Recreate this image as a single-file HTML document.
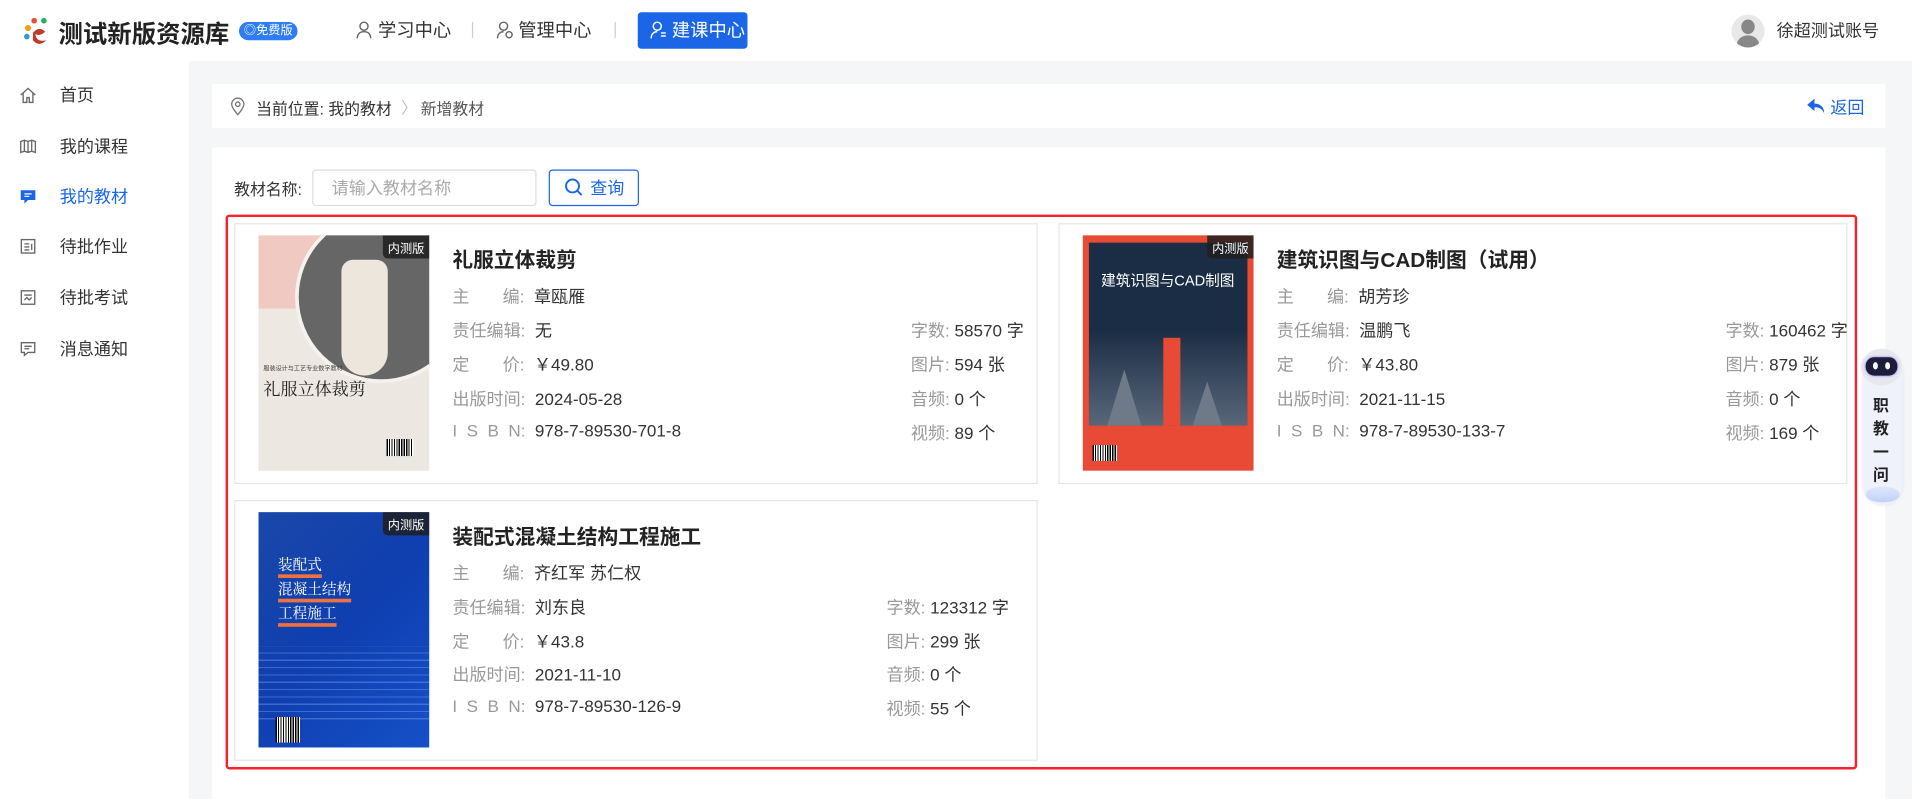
<!DOCTYPE html>
<html><head><meta charset="utf-8"><style>
html,body{margin:0;padding:0;width:1912px;height:798px;overflow:hidden;background:#fff}
#s{position:absolute;left:0;top:0;width:1568px;height:655px;transform:scale(1.2194);transform-origin:0 0;font-family:"Liberation Sans","Noto Sans CJK SC",sans-serif;color:#333;font-size:14px}
.a{position:absolute;white-space:nowrap}
.lb{color:#999}
.card{position:absolute;border:1px solid #e6e6e6;background:#fff}
.tag{position:absolute;right:0;top:0;background:rgba(30,30,30,.85);color:#fff;font-size:10px;padding:2px 4px;border-bottom-left-radius:4px}
.t{font-size:17px;font-weight:bold;color:#222}
.mi{position:absolute;left:16px;width:14px;height:14px}
</style></head><body><div id="s">
<!-- header -->
<svg class="a" style="left:18px;top:13px" width="26" height="26" viewBox="0 0 26 26"><circle cx="5" cy="10" r="2.5" fill="#f39c12"/><circle cx="10" cy="4" r="2.3" fill="#e74c3c"/><circle cx="18" cy="4" r="2.3" fill="#27ae60"/><circle cx="4" cy="17" r="2.3" fill="#3498db"/><path d="M9 14 Q14 8 19 13 Q15 17 11 15 Q12 22 20 20 Q14 26 9 20 Z" fill="#c0392b"/></svg>
<div class="a" style="left:48px;top:12px;font-size:20px;font-weight:bold;color:#222">测试新版资源库</div>
<div class="a" style="left:196px;top:18px;width:48px;height:15px;background:#2e7cf6;border-radius:8px;color:#fff;font-size:10px;line-height:15px;text-align:center">◎免费版</div>
<svg class="a" style="left:292px;top:17px" width="13" height="15" viewBox="0 0 13 15" fill="none" stroke="#666" stroke-width="1.2"><circle cx="6.5" cy="4.5" r="3.3"/><path d="M1 14.5c0-4 2.5-5.5 5.5-5.5s5.5 1.5 5.5 5.5"/></svg>
<div class="a" style="left:310px;top:14px;font-size:15px;color:#333">学习中心</div>
<div class="a" style="left:387px;top:18px;width:1px;height:13px;background:#ccc"></div>
<svg class="a" style="left:407px;top:17px" width="14" height="15" viewBox="0 0 14 15" fill="none" stroke="#666" stroke-width="1.2"><circle cx="6" cy="4.5" r="3.3"/><path d="M1 14.5c0-4 2.5-5.5 5-5.5"/><circle cx="10.5" cy="11.5" r="2.5"/></svg>
<div class="a" style="left:425px;top:14px;font-size:15px;color:#333">管理中心</div>
<div class="a" style="left:504px;top:18px;width:1px;height:13px;background:#ccc"></div>
<div class="a" style="left:523px;top:10px;width:90px;height:30px;background:#1a66e6;border-radius:3px"></div>
<svg class="a" style="left:533px;top:17px" width="14" height="15" viewBox="0 0 14 15" fill="none" stroke="#fff" stroke-width="1.2"><circle cx="6" cy="4.5" r="3.3"/><path d="M1 14.5c0-4 2.5-5.5 5-5.5M9 10h4M9 12.5h4"/></svg>
<div class="a" style="left:551px;top:14px;font-size:15px;color:#fff">建课中心</div>
<div class="a" style="left:1420px;top:12px;width:27px;height:27px;border-radius:50%;background:#e8e8e8;overflow:hidden"><div style="position:absolute;left:8px;top:4px;width:11px;height:12px;border-radius:50%;background:#888"></div><div style="position:absolute;left:4px;top:17px;width:19px;height:14px;border-radius:9px 9px 0 0;background:#888"></div></div>
<div class="a" style="left:1457px;top:15px;font-size:14px;color:#333">徐超测试账号</div>
<!-- bg -->
<div class="a" style="left:155px;top:50px;width:1413px;height:605px;background:#f5f6f8"></div>
<!-- sidebar -->
<div class="a" style="left:0;top:50px;width:155px;height:605px;background:#fff">
<svg class="mi" style="top:21px" viewBox="0 0 14 14" fill="none" stroke="#666" stroke-width="1.1"><path d="M1 7L7 1.5 13 7M3 5.5V13h3V9h2v4h3V5.5"/></svg><div class="a" style="left:49px;top:18px">首页</div>
<svg class="mi" style="top:63px" viewBox="0 0 14 14" fill="none" stroke="#666" stroke-width="1.1"><path d="M1 3v9l3-1 3 1 3-1 3 1V3l-3-1-3 1-3-1zM4 2v9M7 3v9M10 2v9"/></svg><div class="a" style="left:49px;top:60px">我的课程</div>
<svg class="mi" style="top:104px" viewBox="0 0 14 14"><path d="M1 2h12v8H7l-3 3v-3H1z" fill="#1a66e6"/><path d="M4 5h6M4 7h4" stroke="#fff"/></svg><div class="a" style="left:49px;top:101px;color:#1a66e6">我的教材</div>
<svg class="mi" style="top:145px" viewBox="0 0 14 14" fill="none" stroke="#666" stroke-width="1.1"><rect x="1.5" y="1.5" width="11" height="11"/><path d="M4 5h4M4 7.5h4M4 10h4M10 5v5"/></svg><div class="a" style="left:49px;top:142px">待批作业</div>
<svg class="mi" style="top:187px" viewBox="0 0 14 14" fill="none" stroke="#666" stroke-width="1.1"><rect x="1.5" y="1.5" width="11" height="11"/><path d="M4 5h6M4 9l2-2 2 2 2-2"/></svg><div class="a" style="left:49px;top:184px">待批考试</div>
<svg class="mi" style="top:229px" viewBox="0 0 14 14" fill="none" stroke="#666" stroke-width="1.1"><path d="M1.5 2h11v8H7l-3 2.5V10H1.5z"/><path d="M4 5h6M4 7h4"/></svg><div class="a" style="left:49px;top:226px">消息通知</div>
</div>
<!-- breadcrumb -->
<div class="a" style="left:174px;top:69px;width:1372px;height:36px;background:#fff"></div>
<svg class="a" style="left:189px;top:80px" width="12" height="15" viewBox="0 0 12 15" fill="none" stroke="#777" stroke-width="1.1"><path d="M6 14S1 8.5 1 5.5a5 5 0 0110 0C11 8.5 6 14 6 14z"/><circle cx="6" cy="5.5" r="1.8"/></svg>
<div class="a" style="left:210px;top:79px;font-size:13px">当前位置: 我的教材</div>
<div class="a" style="left:329px;top:78px;font-size:13px;color:#bbb">〉</div>
<div class="a" style="left:345px;top:79px;font-size:13px;color:#555">新增教材</div>
<svg class="a" style="left:1482px;top:81px" width="14" height="12" viewBox="0 0 14 12"><path d="M6 0L0 5l6 5V7c4 0 6 1 8 5 0-5-3-8-8-8z" fill="#1a66e6"/></svg>
<div class="a" style="left:1501px;top:78px;font-size:14px;color:#1a66e6">返回</div>
<!-- main -->
<div class="a" style="left:174px;top:121px;width:1372px;height:534px;background:#fff"></div>
<div class="a" style="left:192px;top:145px;font-size:13px">教材名称:</div>
<div class="a" style="left:256px;top:139px;width:182px;height:28px;border:1px solid #ddd;border-radius:3px"></div>
<div class="a" style="left:272px;top:144px;font-size:14px;color:#aaa">请输入教材名称</div>
<div class="a" style="left:450px;top:139px;width:72px;height:28px;border:1px solid #1a66e6;border-radius:3px"></div>
<svg class="a" style="left:463px;top:146px" width="15" height="15" viewBox="0 0 15 15" fill="none" stroke="#1a66e6" stroke-width="1.6"><circle cx="6.5" cy="6.5" r="5.3"/><path d="M10.5 10.5L14 14"/></svg>
<div class="a" style="left:484px;top:144px;font-size:14px;color:#1a66e6">查询</div>
<div class="a" style="left:185px;top:176px;width:1334px;height:451px;border:2.5px solid #f5222d;border-radius:3px"></div>

<!-- card1 -->
<div class="card" style="left:192px;top:183px;width:657px;height:212px"></div>
<div class="a" style="left:212px;top:193px;width:140px;height:193px;background:linear-gradient(#efe9e2,#ebe7e1);overflow:hidden">
<div style="position:absolute;left:0;top:0;width:60px;height:60px;background:#f0c9c3"></div>
<div style="position:absolute;left:30px;top:-20px;width:135px;height:135px;border-radius:50%;background:#666;border:3px solid #f5f2ee"></div>
<div style="position:absolute;left:68px;top:20px;width:38px;height:95px;background:#ece6dc;border-radius:10px 10px 20px 20px"></div>
<div style="position:absolute;left:4px;top:106px;font-size:5px;color:#444">服装设计与工艺专业数字教材</div>
<div style="position:absolute;left:4px;top:116px;font-size:14px;color:#222;font-family:'Noto Serif CJK SC',serif">礼服立体裁剪</div>
<div style="position:absolute;left:105px;top:167px;width:22px;height:14px;background:repeating-linear-gradient(90deg,#000 0 1px,#fff 1px 2px)"></div>
<div class="tag">内测版</div></div>
<div class="a t" style="left:371px;top:199px">礼服立体裁剪</div>
<div class="a" style="left:371px;top:233px"><span class="lb">主&nbsp;&nbsp;&nbsp;&nbsp;&nbsp;&nbsp;&nbsp;编:</span>&nbsp;&nbsp;章瓯雁</div>
<div class="a" style="left:371px;top:261px"><span class="lb">责任编辑:</span>&nbsp;&nbsp;无</div>
<div class="a" style="left:371px;top:289px"><span class="lb">定&nbsp;&nbsp;&nbsp;&nbsp;&nbsp;&nbsp;&nbsp;价:</span>&nbsp;&nbsp;￥49.80</div>
<div class="a" style="left:371px;top:317px"><span class="lb">出版时间:</span>&nbsp;&nbsp;2024-05-28</div>
<div class="a" style="left:371px;top:345px"><span class="lb">I&nbsp;&nbsp;S&nbsp;&nbsp;B&nbsp;&nbsp;N:</span>&nbsp;&nbsp;978-7-89530-701-8</div>
<div class="a" style="left:747px;top:261px"><span class="lb">字数:</span> 58570 字</div>
<div class="a" style="left:747px;top:289px"><span class="lb">图片:</span> 594 张</div>
<div class="a" style="left:747px;top:317px"><span class="lb">音频:</span> 0 个</div>
<div class="a" style="left:747px;top:345px"><span class="lb">视频:</span> 89 个</div>

<!-- card2 -->
<div class="card" style="left:868px;top:183px;width:645px;height:212px"></div>
<div class="a" style="left:888px;top:193px;width:140px;height:193px;background:#e84a35;overflow:hidden">
<div style="position:absolute;left:5px;top:6px;width:130px;height:150px;background:#1b2d45"></div>
<div style="position:absolute;left:5px;top:78px;width:130px;height:78px;background:linear-gradient(transparent,rgba(140,150,165,.55))"></div>
<div style="position:absolute;left:20px;top:110px;width:0;height:0;border-left:14px solid transparent;border-right:14px solid transparent;border-bottom:46px solid #6f7a88"></div>
<div style="position:absolute;left:90px;top:120px;width:0;height:0;border-left:12px solid transparent;border-right:12px solid transparent;border-bottom:36px solid #6f7a88"></div>
<div style="position:absolute;left:66px;top:84px;width:14px;height:72px;background:#e84a35"></div>
<div style="position:absolute;left:15px;top:28px;font-size:12px;color:#fff">建筑识图与CAD制图</div>
<div style="position:absolute;left:8px;top:172px;width:20px;height:13px;background:repeating-linear-gradient(90deg,#000 0 1px,#fff 1px 2px)"></div>
<div class="tag">内测版</div></div>
<div class="a t" style="left:1047px;top:199px">建筑识图与CAD制图（试用）</div>
<div class="a" style="left:1047px;top:233px"><span class="lb">主&nbsp;&nbsp;&nbsp;&nbsp;&nbsp;&nbsp;&nbsp;编:</span>&nbsp;&nbsp;胡芳珍</div>
<div class="a" style="left:1047px;top:261px"><span class="lb">责任编辑:</span>&nbsp;&nbsp;温鹏飞</div>
<div class="a" style="left:1047px;top:289px"><span class="lb">定&nbsp;&nbsp;&nbsp;&nbsp;&nbsp;&nbsp;&nbsp;价:</span>&nbsp;&nbsp;￥43.80</div>
<div class="a" style="left:1047px;top:317px"><span class="lb">出版时间:</span>&nbsp;&nbsp;2021-11-15</div>
<div class="a" style="left:1047px;top:345px"><span class="lb">I&nbsp;&nbsp;S&nbsp;&nbsp;B&nbsp;&nbsp;N:</span>&nbsp;&nbsp;978-7-89530-133-7</div>
<div class="a" style="left:1415px;top:261px"><span class="lb">字数:</span> 160462 字</div>
<div class="a" style="left:1415px;top:289px"><span class="lb">图片:</span> 879 张</div>
<div class="a" style="left:1415px;top:317px"><span class="lb">音频:</span> 0 个</div>
<div class="a" style="left:1415px;top:345px"><span class="lb">视频:</span> 169 个</div>

<!-- card3 -->
<div class="card" style="left:192px;top:410px;width:657px;height:212px"></div>
<div class="a" style="left:212px;top:420px;width:140px;height:193px;background:linear-gradient(135deg,#1a47a8,#0f3fb0 50%,#1550c8);overflow:hidden">
<div style="position:absolute;left:0;top:110px;width:140px;height:60px;background:repeating-linear-gradient(0deg,rgba(150,180,255,.35) 0 1px,transparent 1px 6px)"></div>
<div style="position:absolute;left:16px;top:33px;font-size:12px;line-height:20px;color:#fff;font-family:'Noto Serif CJK SC',serif">
<span style="border-bottom:3px solid #f07040">装配式</span><br><span style="border-bottom:3px solid #f07040">混凝土结构</span><br><span style="border-bottom:3px solid #f07040">工程施工</span></div>
<div style="position:absolute;left:14px;top:168px;width:20px;height:21px;background:repeating-linear-gradient(90deg,#000 0 1px,#fff 1px 2px)"></div>
<div class="tag">内测版</div></div>
<div class="a t" style="left:371px;top:426px">装配式混凝土结构工程施工</div>
<div class="a" style="left:371px;top:460px"><span class="lb">主&nbsp;&nbsp;&nbsp;&nbsp;&nbsp;&nbsp;&nbsp;编:</span>&nbsp;&nbsp;齐红军 苏仁权</div>
<div class="a" style="left:371px;top:488px"><span class="lb">责任编辑:</span>&nbsp;&nbsp;刘东良</div>
<div class="a" style="left:371px;top:516px"><span class="lb">定&nbsp;&nbsp;&nbsp;&nbsp;&nbsp;&nbsp;&nbsp;价:</span>&nbsp;&nbsp;￥43.8</div>
<div class="a" style="left:371px;top:543px"><span class="lb">出版时间:</span>&nbsp;&nbsp;2021-11-10</div>
<div class="a" style="left:371px;top:571px"><span class="lb">I&nbsp;&nbsp;S&nbsp;&nbsp;B&nbsp;&nbsp;N:</span>&nbsp;&nbsp;978-7-89530-126-9</div>
<div class="a" style="left:727px;top:488px"><span class="lb">字数:</span> 123312 字</div>
<div class="a" style="left:727px;top:516px"><span class="lb">图片:</span> 299 张</div>
<div class="a" style="left:727px;top:543px"><span class="lb">音频:</span> 0 个</div>
<div class="a" style="left:727px;top:571px"><span class="lb">视频:</span> 55 个</div>

<!-- robot -->
<div class="a" style="left:1528px;top:290px;width:32px;height:124px;border-radius:16px;background:#f0f2fb;box-shadow:0 0 3px #dde"></div>
<div class="a" style="left:1526px;top:286px;width:34px;height:30px;border-radius:50%;background:#e6e8ee"></div>
<div class="a" style="left:1530px;top:293px;width:26px;height:15px;border-radius:7px;background:#1b1d3a;box-shadow:0 0 2px #7b5cff"></div>
<div class="a" style="left:1536px;top:297px;width:4px;height:6px;border-radius:50%;background:#fff"></div>
<div class="a" style="left:1546px;top:297px;width:4px;height:6px;border-radius:50%;background:#fff"></div>
<div class="a" style="left:1536px;top:323px;font-size:13px;font-weight:bold;line-height:19px;width:14px;color:#222">职<br>教<br>一<br>问</div>
<div class="a" style="left:1530px;top:399px;width:28px;height:13px;border-radius:50%;background:linear-gradient(#dbe4ff,#b4c8f5);opacity:.8"></div>
</div></body></html>
